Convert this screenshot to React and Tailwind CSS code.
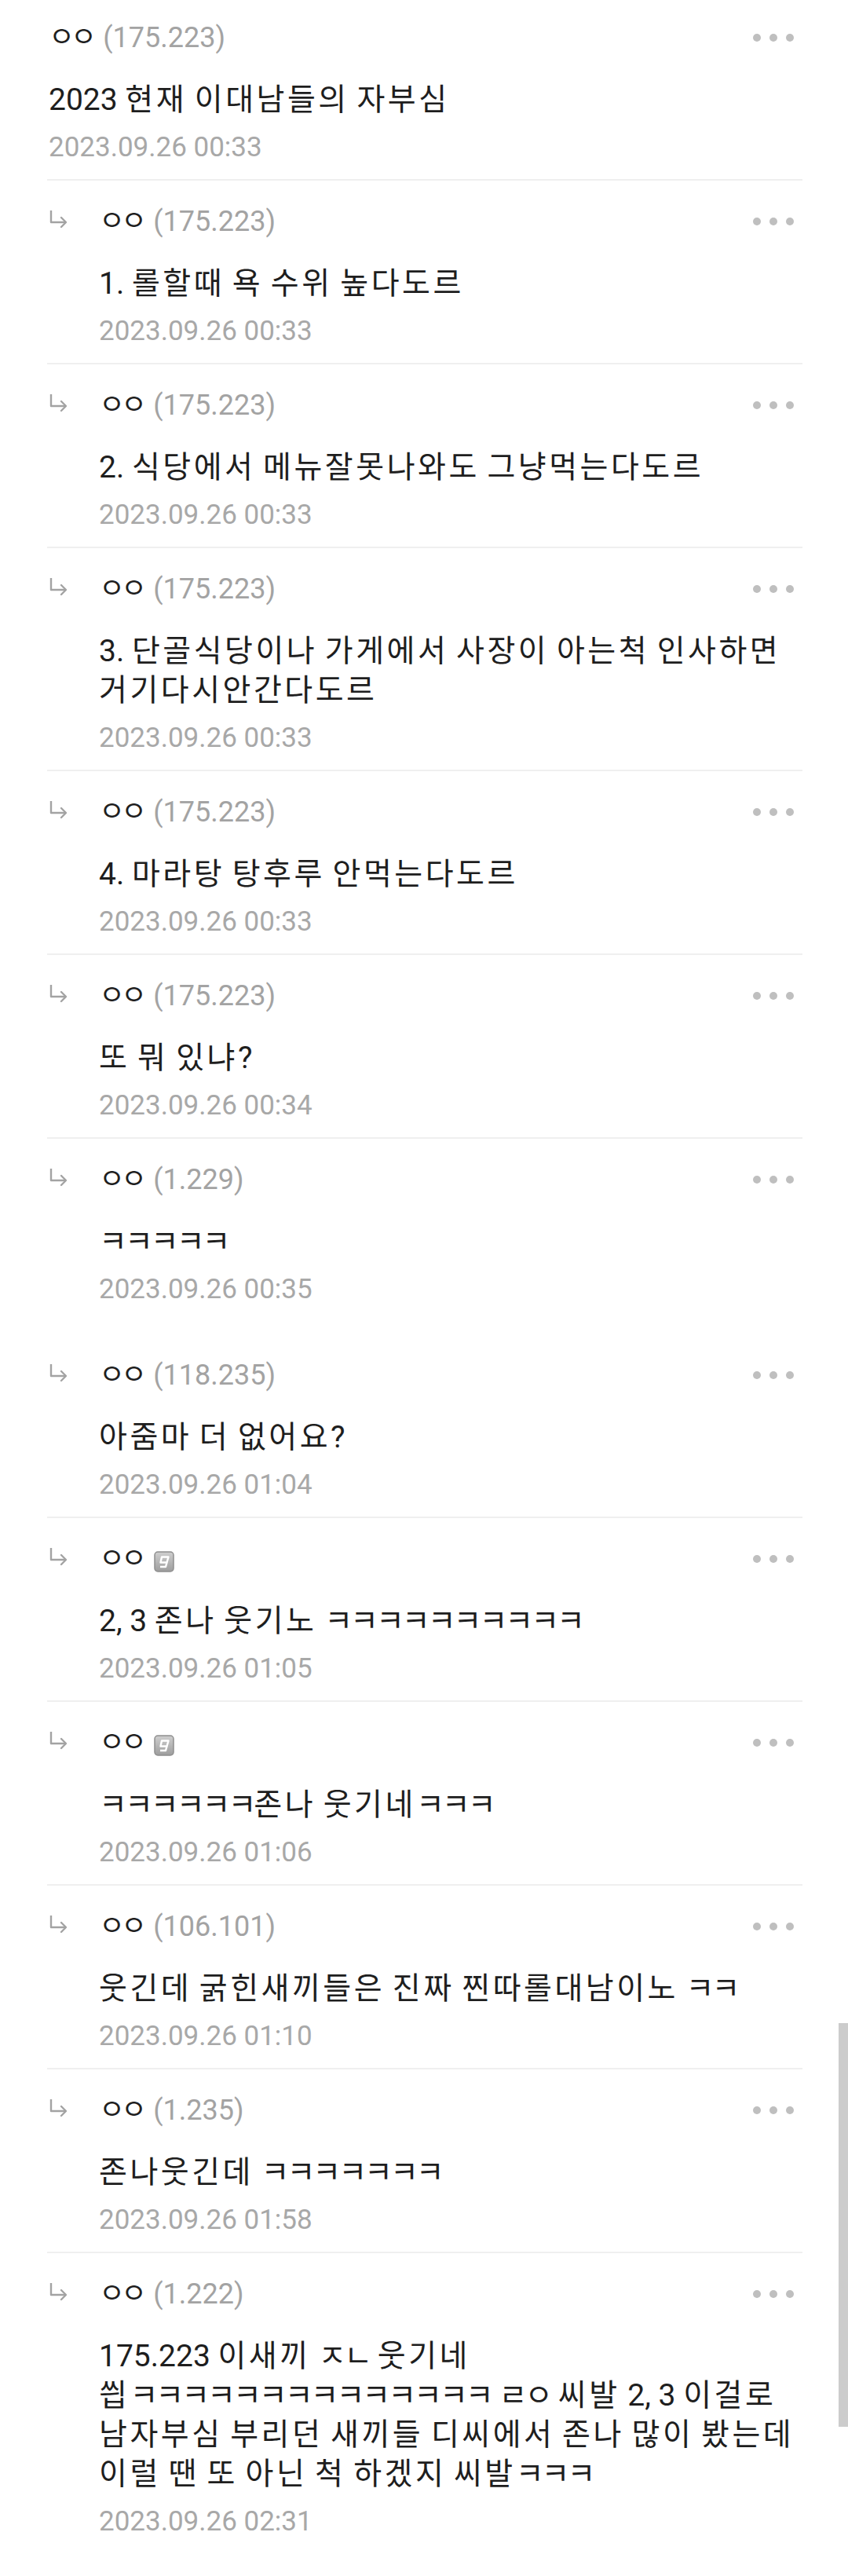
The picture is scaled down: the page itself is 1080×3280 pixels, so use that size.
import React from "react";

const rows = [
  { reply: false, ip: "(175.223)", lines: ["2023 현재 이대남들의 자부심"], date: "2023.09.26 00:33" },
  { reply: true, ip: "(175.223)", lines: ["1. 롤할때 욕 수위 높다도르"], date: "2023.09.26 00:33" },
  { reply: true, ip: "(175.223)", lines: ["2. 식당에서 메뉴잘못나와도 그냥먹는다도르"], date: "2023.09.26 00:33" },
  { reply: true, ip: "(175.223)", lines: ["3. 단골식당이나 가게에서 사장이 아는척 인사하면", "거기다시안간다도르"], date: "2023.09.26 00:33" },
  { reply: true, ip: "(175.223)", lines: ["4. 마라탕 탕후루 안먹는다도르"], date: "2023.09.26 00:33" },
  { reply: true, ip: "(175.223)", lines: ["또 뭐 있냐?"], date: "2023.09.26 00:34" },
  { reply: true, ip: "(1.229)", lines: ["ㅋㅋㅋㅋㅋ"], date: "2023.09.26 00:35", tall: true },
  { reply: true, ip: "(118.235)", lines: ["아줌마 더 없어요?"], date: "2023.09.26 01:04" },
  { reply: true, badge: true, lines: ["2, 3 존나 웃기노 ㅋㅋㅋㅋㅋㅋㅋㅋㅋㅋ"], date: "2023.09.26 01:05" },
  { reply: true, badge: true, lines: ["ㅋㅋㅋㅋㅋㅋ존나 웃기네ㅋㅋㅋ"], date: "2023.09.26 01:06" },
  { reply: true, ip: "(106.101)", lines: ["웃긴데 굵힌새끼들은 진짜 찐따롤대남이노 ㅋㅋ"], date: "2023.09.26 01:10" },
  { reply: true, ip: "(1.235)", lines: ["존나웃긴데 ㅋㅋㅋㅋㅋㅋㅋ"], date: "2023.09.26 01:58" },
  {
    reply: true,
    ip: "(1.222)",
    lines: [
      "175.223 이새끼 ㅈㄴ 웃기네",
      "씝ㅋㅋㅋㅋㅋㅋㅋㅋㅋㅋㅋㅋㅋㅋ ㄹㅇ 씨발 2, 3 이걸로",
      "남자부심 부리던 새끼들 디씨에서 존나 많이 봤는데",
      "이럴 땐 또 아닌 척 하겠지 씨발ㅋㅋㅋ",
    ],
    date: "2023.09.26 02:31",
    last: true,
  },
];

function Styled({ text }) {
  const parts = text.split(/([\u3131-\u318E]+|[\uAC00-\uD7A3]+)/);
  return (
    <>
      {parts.map((p, i) => {
        if (/^[\u3131-\u318E]+$/.test(p))
          return (
            <span key={i} className="tracking-[-3px]">
              {p}
            </span>
          );
        if (/^[\uAC00-\uD7A3]+$/.test(p))
          return (
            <span key={i} className="tracking-[3.5px]">
              {p}
            </span>
          );
        return <React.Fragment key={i}>{p}</React.Fragment>;
      })}
    </>
  );
}

function ReplyArrow() {
  return (
    <svg width="26" height="28" viewBox="0 0 26 28" fill="none" className="mt-[8px] ml-[2px]">
      <path d="M3 2 V17 H22" stroke="#a3a3a3" strokeWidth="2.4" strokeLinejoin="round" />
      <path d="M16 11 L22 17 L16 23" stroke="#a3a3a3" strokeWidth="2.4" strokeLinecap="round" strokeLinejoin="round" />
    </svg>
  );
}

function Badge() {
  return (
    <svg width="26" height="27" viewBox="0 0 26 27" className="ml-[14px] mt-[6px]">
      <defs>
        <linearGradient id="bg" x1="0" y1="0" x2="0" y2="1">
          <stop offset="0" stopColor="#cfcfcf" />
          <stop offset="1" stopColor="#9d9d9d" />
        </linearGradient>
      </defs>
      <rect x="1" y="1" width="24" height="25" rx="4" fill="url(#bg)" stroke="#8f8f8f" strokeWidth="1.5" />
      <path d="M10 7.5 H18.5 L16.5 14.5 H8.5 Z" fill="none" stroke="#ffffff" strokeWidth="2.4" strokeLinejoin="round" />
      <path d="M16.5 14.5 L15 20 H8" fill="none" stroke="#ffffff" strokeWidth="2.4" strokeLinejoin="round" />
    </svg>
  );
}

function Dots() {
  return (
    <div className="mr-[11px] flex items-center gap-[11px]">
      <div className="h-[10px] w-[10px] rounded-full bg-[#bfbfbf]" />
      <div className="h-[10px] w-[10px] rounded-full bg-[#bfbfbf]" />
      <div className="h-[10px] w-[10px] rounded-full bg-[#bfbfbf]" />
    </div>
  );
}

function Row({ row, index }) {
  const top = index === 0;
  return (
    <div>
      <div className={(top ? "pt-[24px] " : "pt-[28px] ") + (row.tall ? "pb-[33px]" : "pb-[16px]") + " flex"}>
        {row.reply && (
          <div className="flex w-[66px] shrink-0 items-start">
            <ReplyArrow />
          </div>
        )}
        <div className={"min-w-0 flex-1" + (top ? " pl-[2px]" : "")}>
          <div className="flex h-[48px] items-center justify-between">
            <div className="flex h-[48px] items-center">
              <span className="text-[36px] leading-[48px] tracking-[-5px] text-[#1f1f1f]">ㅇㅇ</span>
              {row.badge ? (
                <Badge />
              ) : (
                <span className="ml-[13px] text-[36px] leading-[48px] text-[#a3a3a3]">{row.ip}</span>
              )}
            </div>
            <Dots />
          </div>
          <div className="mt-[30px] whitespace-nowrap text-[39px] leading-[50px] text-[#1e1e1e]">
            {row.lines.map((l, i) => (
              <div key={i}>
                <Styled text={l} />
              </div>
            ))}
          </div>
          <div className="mt-[12px] text-[35px] leading-[48px] text-[#a8a8a8]">{row.date}</div>
        </div>
      </div>
      {!row.tall && !row.last && <div className="h-[2px] bg-[#efefef]" />}
    </div>
  );
}

export default function App() {
  return (
    <div className="relative min-h-[3280px] w-[1080px] overflow-hidden bg-white font-['Roboto','Noto_Sans_CJK_KR',sans-serif]">
      <div className="pl-[60px] pr-[58px]">
        {rows.map((r, i) => (
          <Row key={i} row={r} index={i} />
        ))}
      </div>
      <div className="absolute right-0 top-[2576px] h-[514px] w-[12px] bg-[#cccccc]" />
    </div>
  );
}
